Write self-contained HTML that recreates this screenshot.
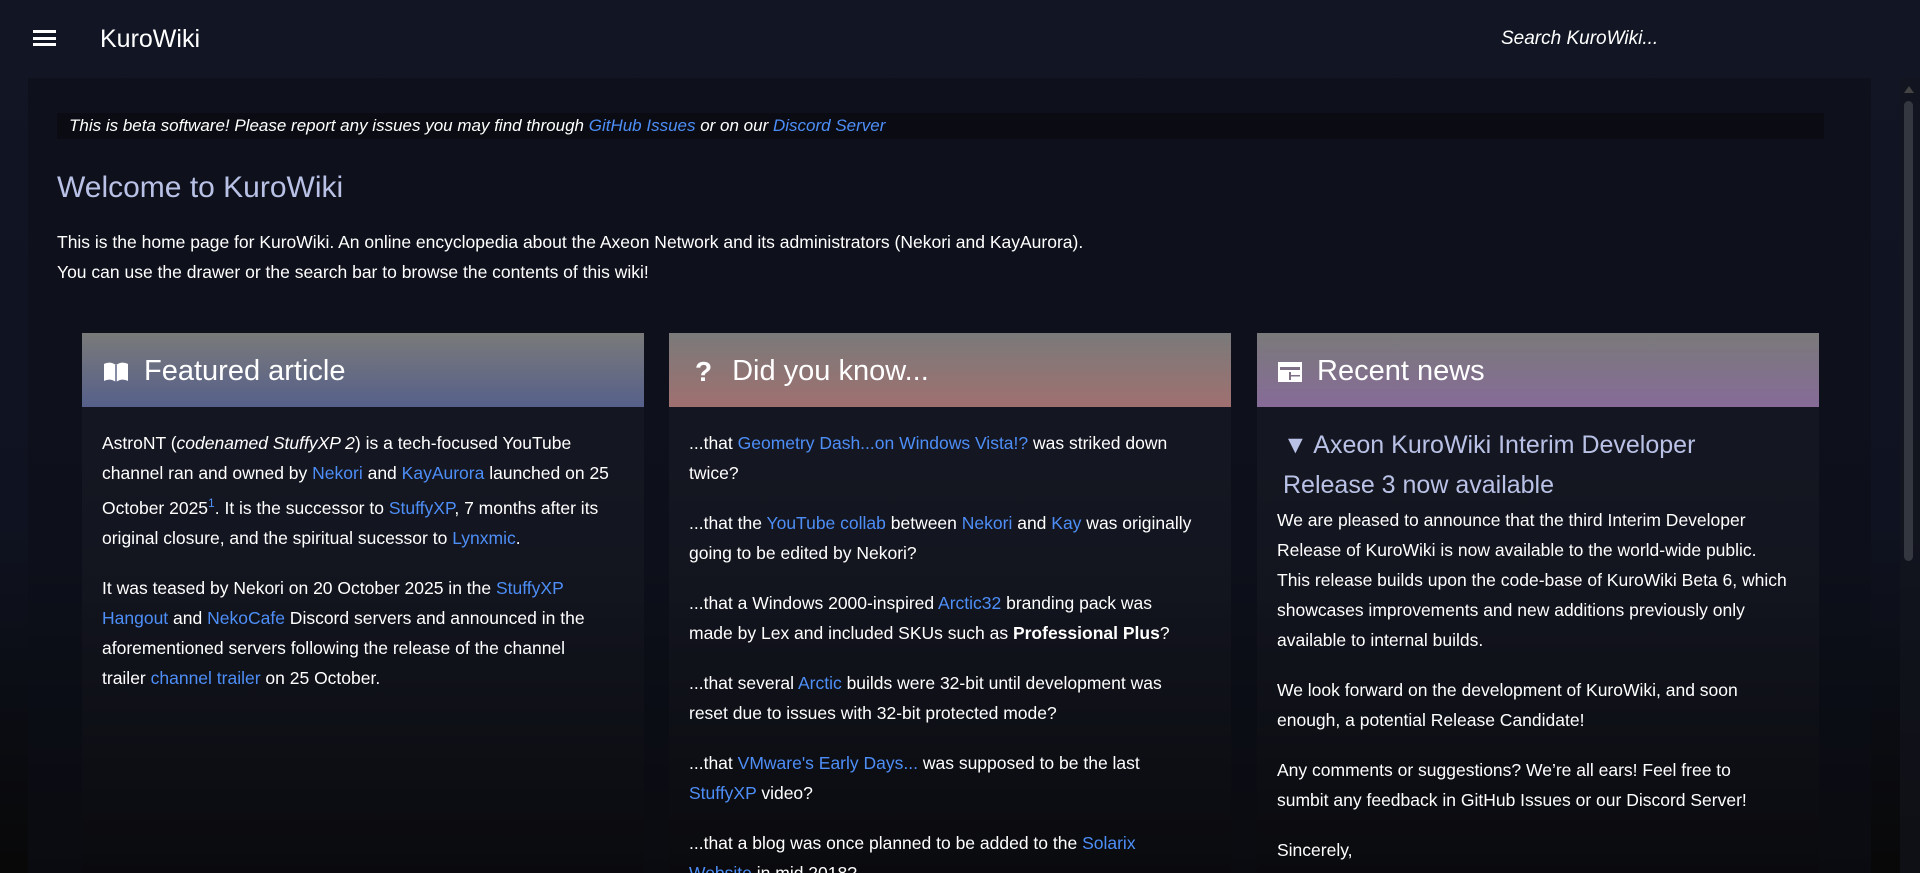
<!DOCTYPE html>
<html><head><meta charset="utf-8"><style>
*{box-sizing:border-box;margin:0;padding:0}
html,body{width:1920px;height:873px;overflow:hidden}
body{background:linear-gradient(180deg,#121624 0%,#0f1220 60%,#0b0d14 80%,#080808 100%);font-family:"Liberation Sans",sans-serif;color:#fff;position:relative}
a{color:#4d8ef7;text-decoration:none}
.top{position:absolute;left:0;top:0;width:1920px;height:78px}
.ham{position:absolute;left:33px;top:30px;width:23px;height:16px}
.ham i{display:block;height:3px;background:#fff;margin-bottom:3.5px}
.logo{position:absolute;left:100px;top:25px;font-size:25px}
.search{position:absolute;left:1501px;top:28px;font-size:19px;font-style:italic}
.main{position:absolute;left:28px;top:78px;width:1843px;height:795px;background:rgba(12,14,24,.55)}
.beta{position:absolute;left:57px;top:113px;width:1767px;height:26px;background:#0b0c13;font-size:17px;font-style:italic;padding:3px 12px}
h1{position:absolute;left:57px;top:171px;font-size:30px;font-weight:normal;color:#b9c2e6}
.intro{position:absolute;left:57px;top:227px;font-size:17.5px;line-height:30px}
.card{position:absolute;top:333px;width:562px;height:540px;overflow:hidden;background:linear-gradient(180deg,rgba(22,24,36,.9) 0%,rgba(20,22,32,.8) 45%,rgba(10,10,12,.6) 100%)}
.hd{height:74px;display:flex;align-items:center;padding-left:20px;padding-top:3px;font-size:29px;font-weight:300}
.hd svg{margin-right:14px}
.bd{padding:21px 33px 18px 20px;font-size:17.5px;line-height:30px}
.bd p{margin-bottom:20px}
.c1{left:82px}.c1 .hd{background:linear-gradient(#7a7a7a,#56608a)}
.c2{left:669px}.c2 .hd{background:linear-gradient(#7a7a7a,#a07070)}
.c3{left:1257px}.c3 .hd{background:linear-gradient(#7a7a7a,#866b98)}
.c3 .bd{padding-right:30px}
.c3 h2{font-size:25px;font-weight:normal;color:#b9c2e6;line-height:40px;padding-left:6px;padding-right:30px;margin-bottom:0;margin-top:-3px}
sup{color:#4d8ef7;font-size:12px}
.sb{position:absolute;left:1900px;top:78px;width:20px;height:795px;background:rgba(20,22,30,.6)}
.sb i{position:absolute;left:4px;top:23px;width:9px;height:460px;background:#34373f;border-radius:5px}
.sb b{position:absolute;left:4px;top:8px;border:5px solid transparent;border-bottom:7px solid #444;border-top:0}
</style></head><body>
<div class="top"><div class="ham"><i></i><i></i><i></i></div><div class="logo">KuroWiki</div><div class="search">Search KuroWiki...</div></div>
<div class="main"></div>
<div class="beta">This is beta software! Please report any issues you may find through <a href="#">GitHub Issues</a> or on our <a href="#">Discord Server</a></div>
<h1>Welcome to KuroWiki</h1>
<div class="intro">This is the home page for KuroWiki. An online encyclopedia about the Axeon Network and its administrators (Nekori and KayAurora).<br>You can use the drawer or the search bar to browse the contents of this wiki!</div>
<div class="card c1"><div class="hd"><svg width="28" height="24" viewBox="0 0 28 24"><path d="M2 4c4-2 8-2 12 1v17c-4-3-8-3-12-1z M26 4c-4-2-8-2-12 1v17c4-3 8-3 12-1z" fill="#fff"/><path d="M14 5v17" stroke="#5e6688" stroke-width="1.5"/></svg>Featured article</div>
<div class="bd"><p>AstroNT (<i>codenamed StuffyXP 2</i>) is a tech-focused YouTube channel ran and owned by <a href="#">Nekori</a> and <a href="#">KayAurora</a> launched on 25 October 2025<sup>1</sup>. It is the successor to <a href="#">StuffyXP</a>, 7 months after its original closure, and the spiritual sucessor to <a href="#">Lynxmic</a>.</p><p>It was teased by Nekori on 20 October 2025 in the <a href="#">StuffyXP Hangout</a> and <a href="#">NekoCafe</a> Discord servers and announced in the aforementioned servers following the release of the channel trailer <a href="#">channel trailer</a> on 25 October.</p></div></div>
<div class="card c2"><div class="hd"><span style="font-weight:bold;font-size:28px;margin:0 20px 0 6px">?</span>Did you know...</div>
<div class="bd"><p>...that <a href="#">Geometry Dash...on Windows Vista!?</a> was striked down twice?</p><p>...that the <a href="#">YouTube collab</a> between <a href="#">Nekori</a> and <a href="#">Kay</a> was originally going to be edited by Nekori?</p><p>...that a Windows 2000-inspired <a href="#">Arctic32</a> branding pack was made by Lex and included SKUs such as <b>Professional Plus</b>?</p><p>...that several <a href="#">Arctic</a> builds were 32-bit until development was reset due to issues with 32-bit protected mode?</p><p>...that <a href="#">VMware's Early Days...</a> was supposed to be the last <a href="#">StuffyXP</a> video?</p><p>...that a blog was once planned to be added to the <a href="#">Solarix Website</a> in mid 2018?</p></div></div>
<div class="card c3"><div class="hd"><svg width="26" height="24" viewBox="0 0 26 24"><rect x="1" y="2" width="24" height="20" fill="#fff"/><rect x="3" y="7" width="20" height="3" fill="#7f7088"/><rect x="12" y="12" width="2" height="8" fill="#7f7088"/><rect x="14" y="15" width="9" height="1.5" fill="#7f7088"/></svg>Recent news</div>
<div class="bd"><h2>▼ Axeon KuroWiki Interim Developer Release 3 now available</h2><p>We are pleased to announce that the third Interim Developer Release of KuroWiki is now available to the world-wide public.<br>This release builds upon the code-base of KuroWiki Beta 6, which showcases improvements and new additions previously only available to internal builds.</p><p>We look forward on the development of KuroWiki, and soon enough, a potential Release Candidate!</p><p>Any comments or suggestions? We’re all ears! Feel free to<br>sumbit any feedback in GitHub Issues or our Discord Server!</p><p>Sincerely,<br>The KuroWiki Development Team</p></div></div>
<div class="sb"><b></b><i></i></div>
</body></html>
